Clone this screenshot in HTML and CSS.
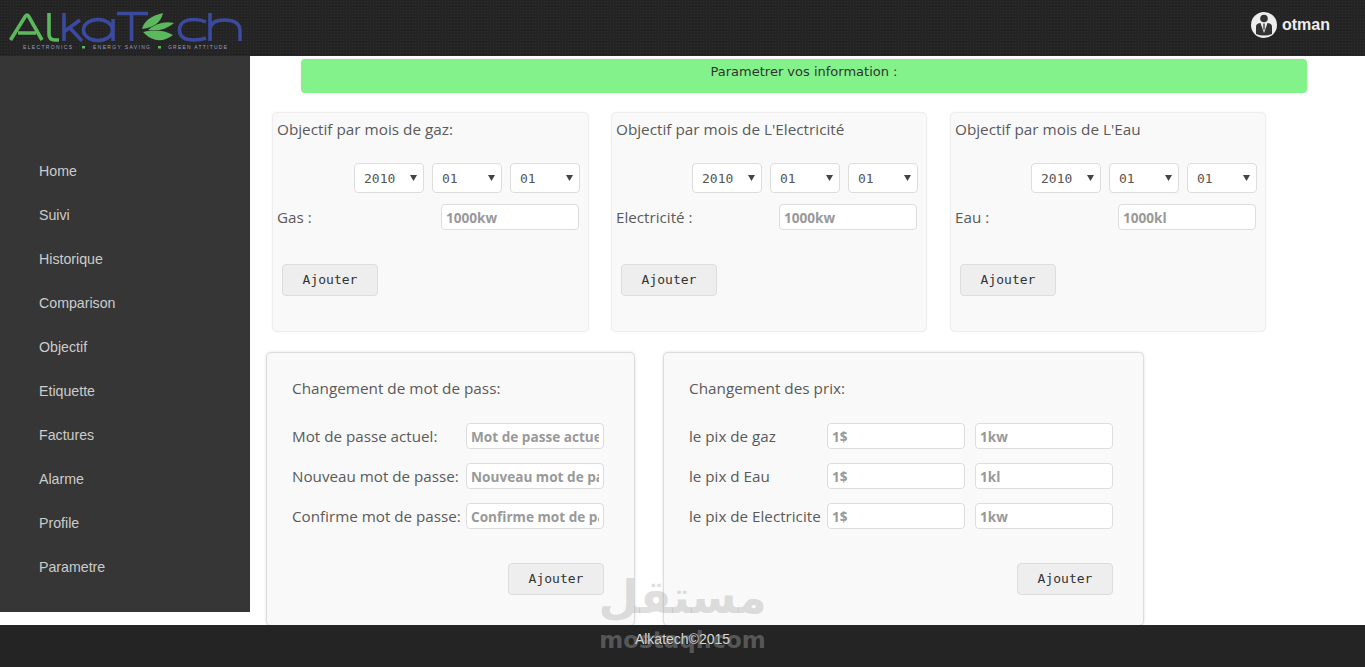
FILE: index.html
```html
<!DOCTYPE html>
<html lang="fr">
<head>
    <meta charset="UTF-8">
    <meta name="viewport" content="width=device-width, initial-scale=1.0">
    <title>Alkatech</title>
    <link rel="stylesheet" href="styles.css">
</head>
<body>

    <header class="topbar">
        <a class="logo" href="#">
            <svg width="245" height="56" viewBox="0 0 245 56">
                <g fill="none" stroke-width="3.6">
                    <path d="M10.5 40 L25.5 16 Q27 14 28.5 16 L42 40 M18 33 H36" stroke="#5cb85c"/>
                    <path d="M49 13 V34 Q49 40 55 40 H59" stroke="#5cb85c"/>
                    <path d="M64 13 V41 M65 31 L80 20 M70 28 L82 41" stroke="#3b4a9e"/>
                    <ellipse cx="98" cy="30" rx="14.5" ry="10.5" stroke="#3b4a9e"/>
                    <path d="M113 19 V41" stroke="#3b4a9e"/>
                    <path d="M117 13.5 H148 M131.500 13.5 V41" stroke="#3b4a9e"/>
                    <path d="M206 22 Q201 19.500 194 19.500 C184 19.500 179.500 24 179.500 30 C179.500 36 184 40 194 40 Q201 40 206 38" stroke="#3b4a9e"/>
                    <path d="M210 13 V41 M210 28 Q212 20 224 20 Q240 20 240 31 V41" stroke="#3b4a9e"/>
                </g>
                <g fill="#5cb85c">
                    <path d="M142 29 Q145 17 163 13 Q160 27 142 29 Z"/>
                    <path d="M148 30 Q160 20 174 23 Q164 32 148 30 Z"/>
                    <path d="M143 32 Q160 28 173 35 Q157 47 143 32 Z"/>
                    <rect x="82" y="46" width="3" height="2.500"/>
                    <rect x="158" y="46" width="3" height="2.500"/>
                </g>
                <text class="logo-tag" x="23" y="49" textLength="49">ELECTRONICS</text>
                <text class="logo-tag" x="93" y="49" textLength="57">ENERGY SAVING</text>
                <text class="logo-tag" x="168" y="49" textLength="59">GREEN ATTITUDE</text>
            </svg>
        </a>
        <div class="user">
            <svg width="26" height="26" viewBox="0 0 26 26">
                <circle cx="13" cy="13" r="13" fill="#eee"/>
                <circle cx="13" cy="6.500" r="3.800" fill="#333"/>
                <path d="M5 22 V14.500 Q5 11.500 9 11 H17 Q21 11.500 21 14.500 V22 Q13 25 5 22 Z" fill="#333"/>
                <path d="M9.500 11 H16.500 L13 21 Z" fill="#eee"/>
                <path d="M12.300 11.500 H13.700 L13.600 17 L13 18.500 L12.400 17 Z" fill="#333"/>
            </svg>
            <span>otman</span>
        </div>
    </header>

    <div class="page">
        <nav class="sidebar">
            <a href="#">Home</a>
            <a href="#">Suivi</a>
            <a href="#">Historique</a>
            <a href="#">Comparison</a>
            <a href="#">Objectif</a>
            <a href="#">Etiquette</a>
            <a href="#">Factures</a>
            <a href="#">Alarme</a>
            <a href="#">Profile</a>
            <a href="#">Parametre</a>
        </nav>

        <main class="content">
            <div class="banner">Parametrer vos information :</div>

            <div class="row-small">
                <section class="card-small">
                    <h3>Objectif par mois de gaz:</h3>
                    <div class="dates">
                        <select><option>2010</option></select>
                        <select><option>01</option></select>
                        <select><option>01</option></select>
                    </div>
                    <div class="amount">
                        <label>Gas :</label>
                        <input type="text" placeholder="1000kw">
                    </div>
                    <button class="btn">Ajouter</button>
                </section>
                <section class="card-small">
                    <h3>Objectif par mois de L'Electricité</h3>
                    <div class="dates">
                        <select><option>2010</option></select>
                        <select><option>01</option></select>
                        <select><option>01</option></select>
                    </div>
                    <div class="amount">
                        <label>Electricité :</label>
                        <input type="text" placeholder="1000kw">
                    </div>
                    <button class="btn">Ajouter</button>
                </section>
                <section class="card-small">
                    <h3>Objectif par mois de L'Eau</h3>
                    <div class="dates">
                        <select><option>2010</option></select>
                        <select><option>01</option></select>
                        <select><option>01</option></select>
                    </div>
                    <div class="amount">
                        <label>Eau :</label>
                        <input type="text" placeholder="1000kl">
                    </div>
                    <button class="btn">Ajouter</button>
                </section>
            </div>

            <div class="row-large">
                <section class="card-large card-pass">
                    <h3>Changement de mot de pass:</h3>
                    <div class="line">
                        <label>Mot de passe actuel:</label>
                        <input type="text" placeholder="Mot de passe actuel">
                    </div>
                    <div class="line">
                        <label>Nouveau mot de passe:</label>
                        <input type="text" placeholder="Nouveau mot de passe">
                    </div>
                    <div class="line">
                        <label>Confirme mot de passe:</label>
                        <input type="text" placeholder="Confirme mot de passe">
                    </div>
                    <div class="actions"><button class="btn">Ajouter</button></div>
                </section>
                <section class="card-large card-price">
                    <h3>Changement des prix:</h3>
                    <div class="line">
                        <label>le pix de gaz</label>
                        <input type="text" placeholder="1$">
                        <input type="text" placeholder="1kw">
                    </div>
                    <div class="line">
                        <label>le pix d Eau</label>
                        <input type="text" placeholder="1$">
                        <input type="text" placeholder="1kl">
                    </div>
                    <div class="line">
                        <label>le pix de Electricite</label>
                        <input type="text" placeholder="1$">
                        <input type="text" placeholder="1kw">
                    </div>
                    <div class="actions"><button class="btn">Ajouter</button></div>
                </section>
            </div>
        </main>
    </div>

    <footer class="footer">
        <p>Alkatech©2015</p>
    </footer>

    <!-- filigrane par dessus la page -->
    <div class="watermark">
        <span class="watermark-ar">مستقل</span>
        <span class="watermark-en">mostaql.com</span>
    </div>

</body>
</html>
```

FILE: styles.css
```css
html, body {
    height: 100%;
}

body {
    margin: 0;
    padding: 0;
    background-color: #fff;
    font-family: "Open Sans", sans-serif;
    color: #5a5a5a;
    display: flex;
    flex-direction: column;
    height: 667px;
    overflow: hidden;
    position: relative;
}

.topbar {
    height: 56px;
    flex-shrink: 0;
    background-color: #242424;
    background-image: radial-gradient(circle, #2f2f2f 0.7px, transparent 0.8px);
    background-size: 3px 3px;
    display: flex;
    justify-content: space-between;
    align-items: flex-start;
}

.logo {
    display: block;
    height: 56px;
}

.logo-tag {
    font-family: "Liberation Sans", sans-serif;
    font-size: 5px;
    fill: #9a9ec4;
}

.user {
    display: flex;
    align-items: center;
    gap: 5px;
    margin: 12px 35px 0 0;
    color: #eee;
    font-family: "Liberation Sans", sans-serif;
    font-weight: bold;
    font-size: 16px;
}

.page {
    flex: 1;
    display: flex;
    align-items: flex-start;
    min-height: 0;
}

.sidebar {
    width: 250px;
    height: 556px;
    flex-shrink: 0;
    box-sizing: border-box;
    padding-top: 93px;
    background-color: #363636;
    display: flex;
    flex-direction: column;
}

.sidebar a {
    height: 44px;
    line-height: 44px;
    padding-left: 39px;
    color: #ccc;
    font-family: "Liberation Sans", sans-serif;
    font-size: 14.2px;
    text-decoration: none;
}

.content {
    flex: 1;
    min-width: 0;
}

.banner {
    width: 1006px;
    height: 34px;
    box-sizing: border-box;
    margin: 3px 0 0 51px;
    padding-top: 5px;
    background-color: #83f28a;
    border-radius: 4px;
    box-shadow: 0 0 3px rgba(0, 0, 0, 0.1);
    color: #333;
    font-family: "DejaVu Sans", sans-serif;
    font-size: 13px;
    text-align: center;
}

.row-small {
    display: flex;
    gap: 22px;
    margin: 19px 0 0 22px;
}

.card-small {
    width: 316px;
    height: 220px;
    box-sizing: border-box;
    padding: 5px 8px 0 4px;
    background-color: #f9f9f9;
    border: 1px solid #eee;
    border-radius: 5px;
    box-shadow: 0 0 2px rgba(0, 0, 0, 0.06);
}

.card-small:first-child {
    width: 317px;
}

.card-small:last-child {
    margin-left: 1px;
}

h3 {
    margin: 0;
    font-size: 15.3px;
    font-weight: normal;
    line-height: 22px;
}

.dates {
    display: flex;
    justify-content: flex-end;
    gap: 8px;
    margin-top: 23px;
}

select {
    appearance: none;
    width: 70px;
    height: 30px;
    box-sizing: border-box;
    padding: 0 9px;
    background: #fff url("data:image/svg+xml,%3Csvg xmlns='http://www.w3.org/2000/svg' width='7' height='6'%3E%3Cpath d='M0 0H7L3.500 6Z' fill='%23444'/%3E%3C/svg%3E") no-repeat right 6px center;
    border: 1px solid #ddd;
    border-radius: 4px;
    font-family: "DejaVu Sans Mono", monospace;
    font-size: 13px;
    color: #555;
}

input {
    width: 138px;
    height: 26px;
    box-sizing: border-box;
    padding: 0 4px;
    background-color: #fff;
    border: 1px solid #ddd;
    border-radius: 4px;
    font-family: "Open Sans", sans-serif;
    font-weight: bold;
    font-size: 13.6px;
    flex-shrink: 0;
}

input::placeholder {
    color: #999;
    opacity: 1;
}

label {
    font-size: 15.2px;
    white-space: nowrap;
}

.amount {
    display: flex;
    justify-content: space-between;
    align-items: center;
    margin-top: 11px;
    padding-right: 1px;
}

.btn {
    width: 96px;
    height: 32px;
    padding: 0 0 2px;
    background-color: #eee;
    border: 1px solid #ddd;
    border-radius: 4px;
    font-family: "DejaVu Sans Mono", monospace;
    font-size: 13px;
    color: #333;
}

.card-small .btn {
    margin: 34px 0 0 5px;
}

.row-large {
    display: flex;
    gap: 28px;
    margin: 20px 0 0 16px;
}

.card-large {
    height: 274px;
    box-sizing: border-box;
    padding: 24px 25px 0;
    background-color: #f9f9f9;
    border: 1px solid #ddd;
    border-radius: 5px;
    box-shadow: 0 0 3px rgba(0, 0, 0, 0.12);
}

.card-pass {
    width: 369px;
}

.card-price {
    width: 481px;
}

.card-large h3 {
    margin-bottom: 24px;
}

.line {
    display: flex;
    align-items: center;
    height: 26px;
    margin-bottom: 14px;
}

.card-pass label {
    width: 174px;
    flex-shrink: 0;
}

.card-price label {
    width: 138px;
    flex-shrink: 0;
}

.card-price input + input {
    margin-left: 10px;
}

.actions {
    display: flex;
    justify-content: flex-end;
    margin-top: 34px;
    padding-right: 5px;
}

.footer {
    height: 42px;
    flex-shrink: 0;
    background-color: #242424;
    color: #ddd;
    font-family: "Liberation Sans", sans-serif;
    font-size: 14px;
    text-align: center;
}

.footer p {
    margin: 6px 0 0;
}

.watermark {
    position: absolute;
    left: 560px;
    top: 564px;
    width: 245px;
    display: flex;
    flex-direction: column;
    align-items: center;
    pointer-events: none;
    color: rgba(170, 170, 170, 0.4);
    font-family: "DejaVu Sans", sans-serif;
    font-weight: bold;
}

.watermark-ar {
    font-size: 46px;
    line-height: 66px;
}

.watermark-en {
    margin-top: -4px;
    font-size: 23px;
    line-height: 28px;
}
```
